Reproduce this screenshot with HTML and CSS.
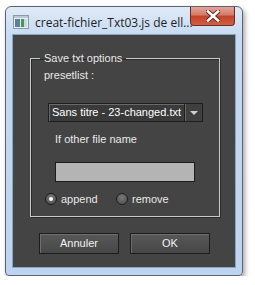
FILE: index.html
```html
<!DOCTYPE html>
<html>
<head>
    <link rel="stylesheet" href="styles.css">
</head>
<body>
    <div class="window">
        <div class="titlebar">
            <svg class="app-icon" width="16" height="14" viewBox="0 0 16 14">
                <rect x="0.5" y="0.5" width="15" height="13" fill="#e8eef2" stroke="#8a9aa6"/>
                <rect x="1" y="1" width="14" height="2" fill="#b9c9d6"/>
                <rect x="2" y="4" width="5" height="8" fill="#5f7f93"/>
                <rect x="8" y="4" width="3" height="8" fill="#3f9a5a"/>
                <rect x="11" y="4" width="3" height="8" fill="#c8d8e4"/>
            </svg>
            <span class="title">creat-fichier_Txt03.js de ell...</span>
            <div class="close">
                <svg width="14" height="12" viewBox="0 0 14 12">
                    <path d="M2 1.5 L12 10.5 M12 1.5 L2 10.5" stroke="#5b2a22" stroke-width="4.4" stroke-linecap="square"/>
                    <path d="M2 1.5 L12 10.5 M12 1.5 L2 10.5" stroke="#fff" stroke-width="2.6" stroke-linecap="square"/>
                </svg>
            </div>
        </div>
        <div class="client">
            <fieldset class="options">
                <legend>Save txt options</legend>
                <div class="preset-label">presetlist :</div>
                <div class="select">
                    <span class="select-text">Sans titre - 23-changed.txt</span>
                    <span class="select-arrow"></span>
                </div>
                <div class="other-label">If other file name</div>
                <div class="text-input"></div>
                <div class="radios">
                    <label class="radio"><span class="dot checked"></span>append</label>
                    <label class="radio"><span class="dot"></span>remove</label>
                </div>
            </fieldset>
            <div class="buttons">
                <div class="btn">Annuler</div>
                <div class="btn">OK</div>
            </div>
        </div>
    </div>
</body>
</html>
```

FILE: styles.css
```css
body {
    margin: 0;
    padding: 0;
    background-color: #fff;
    font-family: "Liberation Sans", Arial, sans-serif;
}
.window {
    margin: 6px 0 0 5px;
    width: 236px;
    height: 268px;
    border: 1px solid #5a6470;
    border-radius: 6px 6px 4px 4px;
    background: linear-gradient(#dfeaf7, #c6daf1 30px, #bcd4ef);
    box-shadow: 2px 3px 5px rgba(0, 0, 0, 0.35);
    display: flex;
    flex-direction: column;
}
.titlebar {
    height: 27px;
    display: flex;
    align-items: center;
    padding-left: 7px;
    position: relative;
}
.app-icon {
    margin-top: 3px;
}
.title {
    margin-left: 6px;
    margin-top: 3px;
    font-family: "Open Sans", sans-serif;
    font-size: 12px;
    color: #1e1e1e;
}
.close {
    position: absolute;
    top: 0;
    right: 7px;
    width: 43px;
    height: 18px;
    border: 1px solid #6f2b20;
    border-top: none;
    border-radius: 0 0 4px 4px;
    background: linear-gradient(#e4a497, #d47a66 45%, #c3422a 50%, #d0603f);
    display: flex;
    align-items: center;
    justify-content: center;
}
.client {
    margin: 0 6px;
    height: 234px;
    background-color: #444;
    border: 1px solid #8ea6c2;
    box-sizing: border-box;
    padding-left: 26px;
}
.options {
    margin: 16px 0 0 -9px;
    width: 190px;
    padding: 0 0 11px 0;
    border: none;
    border-top: 1px solid #c9c9c9;
    border-left: 1px solid #c9c9c9;
    border-right: 1px solid #c9c9c9;
    border-bottom: 1px solid #c9c9c9;
    box-shadow: 1px 1px 0 #2a2a2a, inset 1px 1px 0 #2a2a2a;
    box-sizing: border-box;
    font-size: 11px;
    color: #e8e8e8;
}
.options legend {
    margin-left: 9px;
    padding: 0 4px;
    line-height: 14px;
}
.preset-label {
    margin: 3px 0 0 13px;
    line-height: 14px;
}
.select {
    margin: 21px 0 0 17px;
    width: 155px;
    height: 19px;
    box-sizing: border-box;
    border: 1px solid #1e1e1e;
    box-shadow: inset 1px 1px 0 #6a6a6a;
    background: #3a3a3a;
    display: flex;
    color: #fff;
}
.select-text {
    flex: 1;
    padding-left: 3px;
    line-height: 17px;
    font-size: 11px;
}
.select-arrow {
    width: 17px;
    border-left: 1px solid #1e1e1e;
    box-shadow: inset 1px 0 0 #666;
    background: #3f3f3f;
    position: relative;
}
.select-arrow::after {
    content: "";
    position: absolute;
    left: 5px;
    top: 7px;
    border-left: 4px solid transparent;
    border-right: 4px solid transparent;
    border-top: 4px solid #d0d0d0;
}
.other-label {
    margin: 10px 0 0 24px;
    line-height: 14px;
}
.text-input {
    margin: 16px 0 0 24px;
    width: 140px;
    height: 20px;
    box-sizing: border-box;
    border: 1px solid #1c1c1c;
    background: #b4b4b4;
}
.radios {
    margin: 11px 0 0 14px;
    display: flex;
    gap: 0;
}
.radio {
    display: flex;
    align-items: center;
    line-height: 12px;
    width: 71px;
}
.dot {
    width: 10px;
    height: 10px;
    border-radius: 50%;
    border: 1px solid #1e1e1e;
    background: radial-gradient(circle at 50% 35%, #7a7a7a, #4a4a4a);
    margin-right: 4px;
    position: relative;
}
.dot.checked::after {
    content: "";
    position: absolute;
    left: 3px;
    top: 3px;
    width: 4px;
    height: 4px;
    border-radius: 50%;
    background: #fff;
}
.buttons {
    margin-top: 16px;
    display: flex;
    gap: 11px;
}
.btn {
    width: 80px;
    height: 21px;
    box-sizing: border-box;
    border: 1px solid #1c1c1c;
    box-shadow: inset 1px 1px 0 #6e6e6e;
    background: linear-gradient(#585858, #474747);
    color: #f2f2f2;
    font-size: 11px;
    line-height: 19px;
    text-align: center;
}
```
